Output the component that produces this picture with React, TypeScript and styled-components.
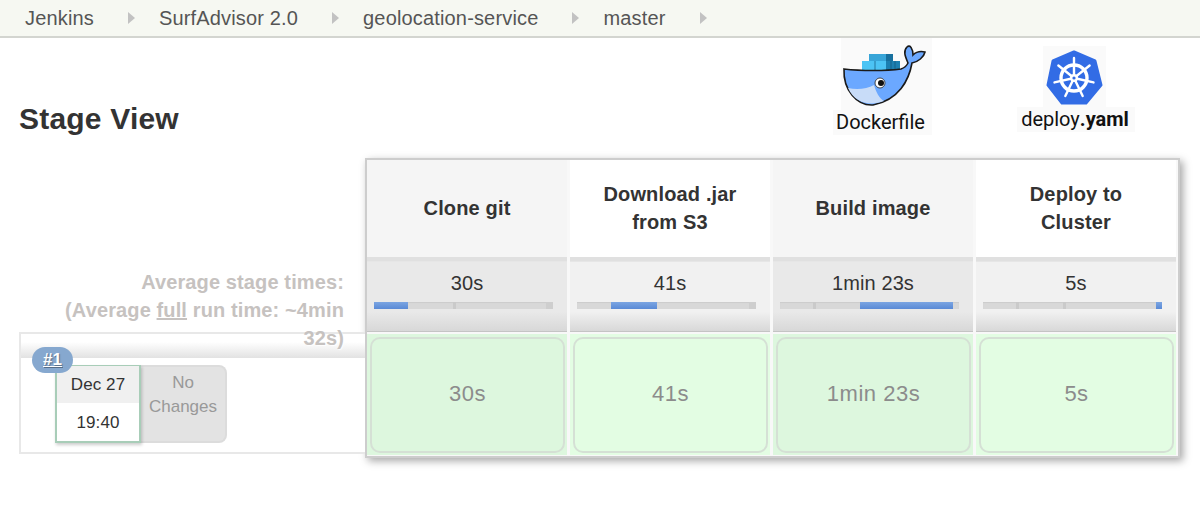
import { createGlobalStyle } from 'styled-components';
import styled from 'styled-components';

const GlobalStyle = createGlobalStyle`
  html, body {
    margin: 0;
    background: #fff;
    font-family: "Liberation Sans", Arial, sans-serif;
    color: #333;
  }
`;

const Page = styled.div`
  width: 1200px;
  height: 512px;
  overflow: hidden;
`;

const Breadcrumbs = styled.nav`
  display: flex;
  align-items: center;
  height: 36px;
  padding-left: 25px;
  background: #f6f8f2;
  border-bottom: 2px solid #d3d5d0;
`;

const Crumb = styled.a`
  font-size: 20px;
  letter-spacing: 0.16px;
  color: #555;
`;

const Arrow = styled.span`
  width: 0;
  height: 0;
  margin: 0 24px 0 34px;
  border-left: 7px solid #c2c2c2;
  border-top: 6px solid transparent;
  border-bottom: 6px solid transparent;
`;

const Header = styled.header`
  display: flex;
  align-items: flex-start;
  height: 120px;
  padding: 0 65px 0 19px;
`;

const Title = styled.h2`
  flex: 1;
  margin: 62px 0 0;
  font-size: 30px;
  letter-spacing: 0.2px;
  line-height: 38px;
  font-weight: bold;
  color: #333;
`;

const Figure = styled.figure<{ $top: number; $width: number; $gap: number }>`
  display: flex;
  flex-direction: column;
  align-items: center;
  width: ${p => p.$width}px;
  margin: ${p => p.$top}px ${p => p.$gap}px 0 0;
`;

const Picture = styled.svg<{ $shift: number }>`
  display: block;
  margin-left: ${p => p.$shift}px;
  background: #fafafa;
`;

const Caption = styled.figcaption<{ $inset: number }>`
  width: 100%;
  height: 25px;
  box-sizing: border-box;
  padding-right: ${p => p.$inset}px;
  background: #fafafa;
  font-family: Roboto, sans-serif;
  font-size: 20px;
  line-height: 25px;
  text-align: center;
  color: #111;

  b {
    font-weight: bold;
  }
`;

const Body = styled.main`
  display: flex;
  align-items: flex-start;
`;

const Side = styled.aside`
  width: 346px;
  margin-left: 19px;
`;

const Averages = styled.div`
  position: relative;
  z-index: 1;
  height: 174px;
  padding: 110px 21px 0 20px;
  box-sizing: border-box;
  font-size: 20px;
  font-weight: bold;
  letter-spacing: 0.12px;
  line-height: 28px;
  text-align: right;
  color: #c6c2c0;
  text-shadow: 1px 1px 1px rgba(255, 255, 255, 0.8);

  u {
    text-decoration: underline;
  }
`;

const BuildRow = styled.div`
  position: relative;
  height: 122px;
  box-sizing: border-box;
  border: 2px solid #e8e8e8;
  border-right: 0;
  background: linear-gradient(#fff 0, #fff 8px, #e2e2e2 24px, #fff 24px);
`;

const Badge = styled.a`
  position: absolute;
  left: 11px;
  top: 13px;
  z-index: 2;
  width: 41px;
  height: 26px;
  border-radius: 13px;
  background: #86a8cf;
  color: #fff;
  font-size: 17px;
  font-weight: bold;
  line-height: 26px;
  text-align: center;
  text-decoration: underline;
  text-shadow: 1px 1px 1px rgba(0, 0, 0, 0.35);
`;

const BuildInfo = styled.div`
  display: flex;
  margin: 31px 0 0 34px;
  width: 172px;
  height: 78px;
`;

const DateCard = styled.div`
  z-index: 1;
  width: 86px;
  box-sizing: border-box;
  border: 2px solid #a8cdb8;
  border-top-width: 1px;
  box-shadow: 1px 2px 3px rgba(0, 0, 0, 0.2);
  font-size: 17px;
  letter-spacing: 0.1px;
  text-align: center;
  background: #fff;
`;

const DatePart = styled.div`
  height: 37px;
  line-height: 37px;
  background: #f0f0f0;
`;

const TimePart = styled.div`
  height: 38px;
  line-height: 40px;
`;

const NoChanges = styled.div`
  width: 86px;
  box-sizing: border-box;
  padding: 4px 0 0;
  border-radius: 0 8px 8px 0;
  border: 2px solid #dcdcdc;
  border-left: 0;
  background: #e3e3e3;
  color: #999;
  font-size: 17px;
  line-height: 24px;
  text-align: center;
`;

const Panel = styled.section`
  display: grid;
  grid-template-columns: repeat(4, 200px);
  grid-template-rows: 98px 72px 121px;
  column-gap: 3px;
  row-gap: 2px;
  width: 815px;
  height: 300px;
  box-sizing: border-box;
  padding: 0 2px 0 0;
  border: 2px solid #cdcdcd;
  background: #f8f8f8;
  box-shadow: 3px 3px 8px rgba(0, 0, 0, 0.35);
`;

const StageHead = styled.div<{ $odd: boolean }>`
  display: flex;
  align-items: center;
  justify-content: center;
  padding: 0 30px 1px;
  margin-bottom: -3px;
  background: ${p => (p.$odd ? '#f5f5f5' : '#fff')};
  border-bottom: 4px solid #e0e0e0;
  font-size: 20px;
  font-weight: bold;
  letter-spacing: 0.15px;
  line-height: 28px;
  text-align: center;
  color: #333;
`;

const AvgCell = styled.div<{ $odd: boolean }>`
  margin-top: 1px;
  padding-top: 9px;
  box-sizing: border-box;
  border-top: 1px solid #e6e6e6;
  border-bottom: 1px solid #c4c4c4;
  background: linear-gradient(
    ${p => (p.$odd ? '#e9e9e9' : '#f1f1f1')} 0,
    ${p => (p.$odd ? '#e9e9e9' : '#f1f1f1')} 72%,
    #d8d8d8 100%
  );
  color: #333;
  font-size: 20px;
  letter-spacing: 0.1px;
  line-height: 24px;
  text-align: center;
`;

const Track = styled.div`
  position: relative;
  height: 7px;
  margin: 7px 14px 0 7px;
  background: #d8d8d8;
  box-shadow: inset 0 1px 1px rgba(0, 0, 0, 0.06);
`;

const Tick = styled.i`
  position: absolute;
  top: 0;
  width: 3px;
  height: 7px;
  background: #cacaca;
`;

const EndShade = styled.i`
  position: absolute;
  top: 0;
  right: 0;
  width: 7px;
  height: 7px;
  background: #cecece;
`;

const Fill = styled.i`
  position: absolute;
  top: 0;
  height: 7px;
  background: linear-gradient(#7ba5e2, #5a8ad6);
`;

const RunCell = styled.div<{ $odd: boolean }>`
  display: flex;
  padding: 3px 2px 2px 3px;
  background: ${p => (p.$odd ? '#ddf7de' : '#e3fde3')};
`;

const RunInner = styled.div`
  flex: 1;
  display: flex;
  align-items: center;
  justify-content: center;
  padding-bottom: 2px;
  border: 2px solid #d5e0d5;
  border-radius: 10px;
  color: #8c8c8c;
  font-size: 22px;
  letter-spacing: 0.5px;
`;

const stages = [
  { name: 'Clone git', avg: '30s', from: 0, len: 34, ticks: [79], shaded: true, odd: true },
  { name: 'Download .jar from S3', avg: '41s', from: 34, len: 46, ticks: [], shaded: true, odd: false },
  { name: 'Build image', avg: '1min 23s', from: 80, len: 93, ticks: [33], shaded: false, odd: true },
  { name: 'Deploy to Cluster', avg: '5s', from: 173, len: 6, ticks: [33, 80], shaded: false, odd: false },
];

const App = () => {
  return (
    <Page>
      <GlobalStyle />
      <Breadcrumbs>
        <Crumb>Jenkins</Crumb>
        <Arrow />
        <Crumb>SurfAdvisor 2.0</Crumb>
        <Arrow />
        <Crumb>geolocation-service</Crumb>
        <Arrow />
        <Crumb>master</Crumb>
        <Arrow />
      </Breadcrumbs>
      <Header>
        <Title>Stage View</Title>
        <Figure $top={0} $width={99} $gap={85}>
          <Picture $shift={8} width={91} height={72} viewBox="0 0 91 72">
            <rect x="28" y="16" width="24" height="8" fill="#38a5d8" />
            <rect x="21" y="23" width="38" height="9" fill="#4cc4f4" />
            <rect x="45" y="16" width="7" height="8" fill="#17709e" />
            <rect x="45" y="23" width="14" height="9" fill="#1c7fb0" />
            <path d="M50 23 V32 M54 23 V32 M34 23 V32" stroke="#12587c" strokeWidth="0.7" />
            <path
              d="M3 31 C20 33 45 33 60 31 C63 30 66 27 67 25 C64 18 62 13 66 9 C69 6 72 11 72 17 C75 14 80 13 84 14 C83 19 77 24 71 25 C68 42 58 62 32 67 C16 68 2 52 3 31Z"
              fill="#6ba8ff"
              stroke="#1a1a1a"
              strokeWidth="1.6"
            />
            <path d="M7 50 C16 52 26 51 33 47 C35 54 38 60 43 63 C30 68 14 66 7 50Z" fill="#c8dcf8" />
            <circle cx="39" cy="45" r="5" fill="#fff" stroke="#222" strokeWidth="0.8" />
            <circle cx="40" cy="45" r="3" fill="#111" />
          </Picture>
          <Caption $inset={4}>Dockerfile</Caption>
        </Figure>
        <Figure $top={8} $width={118} $gap={0}>
          <Picture $shift={-3} width={63} height={61} viewBox="0 0 63 61">
            <path
              d="M31 6 L52 15 L58 39 L43 57 L19 57 L5 39 L10 15Z"
              fill="#326ce5"
              stroke="#326ce5"
              strokeWidth="3"
              strokeLinejoin="round"
            />
            <circle cx="31" cy="32" r="13" fill="none" stroke="#fff" strokeWidth="3.4" />
            {[0, 1, 2, 3, 4, 5, 6].map(i => (
              <line
                key={i}
                x1="31"
                y1="32"
                x2="31"
                y2="12"
                stroke="#fff"
                strokeWidth="2.4"
                strokeLinecap="round"
                transform={`rotate(${(i * 360) / 7} 31 32)`}
              />
            ))}
            <circle cx="31" cy="32" r="4" fill="#fff" />
            <circle cx="31" cy="32" r="1.6" fill="#326ce5" />
          </Picture>
          <Caption $inset={2}>
            deploy<b>.yaml</b>
          </Caption>
        </Figure>
      </Header>
      <Body>
        <Side>
          <Averages>
            Average stage times:
            <br />
            (Average <u>full</u> run time: ~4min 32s)
          </Averages>
          <BuildRow>
            <Badge>#1</Badge>
            <BuildInfo>
              <DateCard>
                <DatePart>Dec 27</DatePart>
                <TimePart>19:40</TimePart>
              </DateCard>
              <NoChanges>
                No
                <br />
                Changes
              </NoChanges>
            </BuildInfo>
          </BuildRow>
        </Side>
        <Panel>
          {stages.map(s => (
            <StageHead key={s.name} $odd={s.odd}>
              {s.name}
            </StageHead>
          ))}
          {stages.map(s => (
            <AvgCell key={s.name} $odd={s.odd}>
              {s.avg}
              <Track>
                {s.ticks.map(t => (
                  <Tick key={t} style={{ left: t }} />
                ))}
                {s.shaded && <EndShade />}
                <Fill style={{ left: s.from, width: s.len }} />
              </Track>
            </AvgCell>
          ))}
          {stages.map(s => (
            <RunCell key={s.name} $odd={s.odd}>
              <RunInner>{s.avg}</RunInner>
            </RunCell>
          ))}
        </Panel>
      </Body>
    </Page>
  );
};

export default App;
